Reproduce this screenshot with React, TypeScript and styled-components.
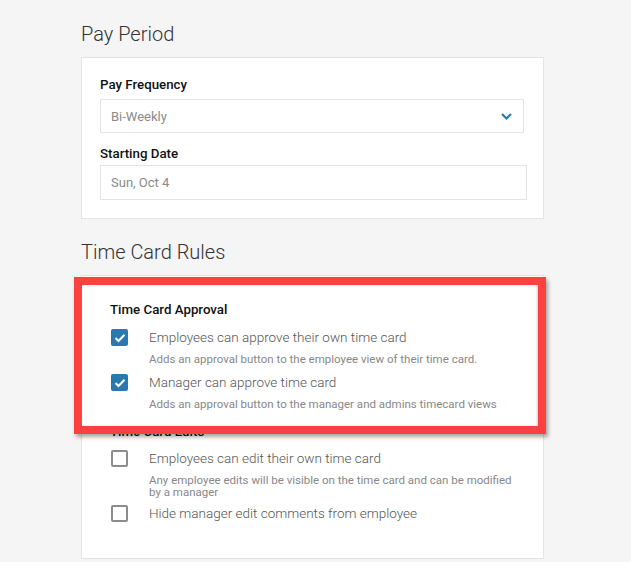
import React from "react";
import styled, { createGlobalStyle } from "styled-components";

const Global = createGlobalStyle`
  html, body { margin: 0; padding: 0; background: #f5f5f5; }
  body { font-family: Roboto, "Liberation Sans", Arial, sans-serif; -webkit-font-smoothing: antialiased; }
`;

const Page = styled.div`
  position: relative;
  width: 631px;
  height: 562px;
  overflow: hidden;
  padding: 22px 0 0 81px;
  box-sizing: border-box;
  background: #f5f5f5;
`;

const SectionTitle = styled.h2<{ $top?: number }>`
  margin: ${(p) => p.$top ?? 0}px 0 11px 0;
  font-size: 20px;
  line-height: 24px;
  font-weight: 300;
  color: #333;
`;

const Card = styled.div<{ $pad: string }>`
  width: 463px;
  box-sizing: border-box;
  background: #fff;
  border: 1px solid #e4e4e4;
  padding: ${(p) => p.$pad};
  display: flex;
  flex-direction: column;
`;

const FieldLabel = styled.div<{ $top?: number; $gap?: number }>`
  margin-top: ${(p) => p.$top ?? 0}px;
  margin-bottom: ${(p) => p.$gap ?? 0}px;
  font-size: 13.3px;
  line-height: 16px;
  font-weight: 500;
  color: #111;
`;

const Box = styled.div<{ $w: number; $h: number }>`
  width: ${(p) => p.$w}px;
  height: ${(p) => p.$h}px;
  box-sizing: border-box;
  border: 1px solid #e4e4e4;
  background: #fff;
  display: flex;
  align-items: center;
  justify-content: space-between;
  padding: 0 11px 0 10px;
  font-size: 13px;
  color: #8a8a8a;
`;

const Chevron = () => (
  <svg width="11" height="7" viewBox="0 0 11 7">
    <path d="M1 1l4.5 4.5L10 1" fill="none" stroke="#2a7ab0" strokeWidth="2.2" />
  </svg>
);

const GroupTitle = styled.div<{ $top?: number }>`
  margin-top: ${(p) => p.$top ?? 0}px;
  font-size: 13.3px;
  line-height: 16px;
  font-weight: 500;
  color: #111;
`;

const Option = styled.div<{ $top: number }>`
  margin-top: ${(p) => p.$top}px;
  display: grid;
  grid-template-columns: 39px 1fr;
  align-items: start;
`;

const Check = styled.div<{ $on?: boolean }>`
  width: 17px;
  height: 17px;
  margin: 1px 0 0 1px;
  box-sizing: border-box;
  border-radius: 2px;
  display: flex;
  align-items: center;
  justify-content: center;
  background: ${(p) => (p.$on ? "#2a78b0" : "#fff")};
  border: ${(p) => (p.$on ? "none" : "2px solid #8c8c8c")};
`;

const OptionText = styled.div`
  display: flex;
  flex-direction: column;
`;

const OptionLabel = styled.div`
  font-size: 13.5px;
  line-height: 18px;
  font-weight: 300;
  color: #555;
`;

const OptionDesc = styled.div`
  margin-top: 7px;
  font-size: 11.5px;
  line-height: 12px;
  color: #888;
  max-width: 366px;
`;

const Highlight = styled.div`
  position: absolute;
  left: 74px;
  top: 277px;
  width: 472px;
  height: 157px;
  box-sizing: border-box;
  border: 8px solid #fc4141;
  box-shadow: 2px 3px 4px rgba(0, 0, 0, 0.35), inset -1px 0 2px rgba(0, 0, 0, 0.2);
  pointer-events: none;
`;

const Tick = () => (
  <svg width="12" height="10" viewBox="0 0 12 10">
    <path d="M1.5 5l3 3L10.5 1.8" fill="none" stroke="#fff" strokeWidth="2" />
  </svg>
);

const Row = ({ on, label, desc, top }: { on?: boolean; label: string; desc?: string; top: number }) => (
  <Option $top={top}>
    <Check $on={on}>{on && <Tick />}</Check>
    <OptionText>
      <OptionLabel>{label}</OptionLabel>
      {desc && <OptionDesc>{desc}</OptionDesc>}
    </OptionText>
  </Option>
);

export default function App() {
  return (
    <>
      <Global />
      <Page>
        <SectionTitle>Pay Period</SectionTitle>
        <Card $pad="19px 18px 18px 18px">
          <FieldLabel $gap={6}>Pay Frequency</FieldLabel>
          <Box $w={424} $h={34}>
            Bi-Weekly
            <Chevron />
          </Box>
          <FieldLabel $top={13} $gap={3}>Starting Date</FieldLabel>
          <Box $w={427} $h={35}>Sun, Oct 4</Box>
        </Card>
        <SectionTitle $top={21}>Time Card Rules</SectionTitle>
        <Card $pad="26px 27px 36px 28px">
          <GroupTitle>Time Card Approval</GroupTitle>
          <Row
            top={10}
            on
            label="Employees can approve their own time card"
            desc="Adds an approval button to the employee view of their time card."
          />
          <Row
            top={8}
            on
            label="Manager can approve time card"
            desc="Adds an approval button to the manager and admins timecard views"
          />
          <GroupTitle $top={14}>Time Card Edits</GroupTitle>
          <Row
            top={9}
            label="Employees can edit their own time card"
            desc="Any employee edits will be visible on the time card and can be modified by a manager"
          />
          <Row top={6} label="Hide manager edit comments from employee" />
        </Card>
        <Highlight />
      </Page>
    </>
  );
}
